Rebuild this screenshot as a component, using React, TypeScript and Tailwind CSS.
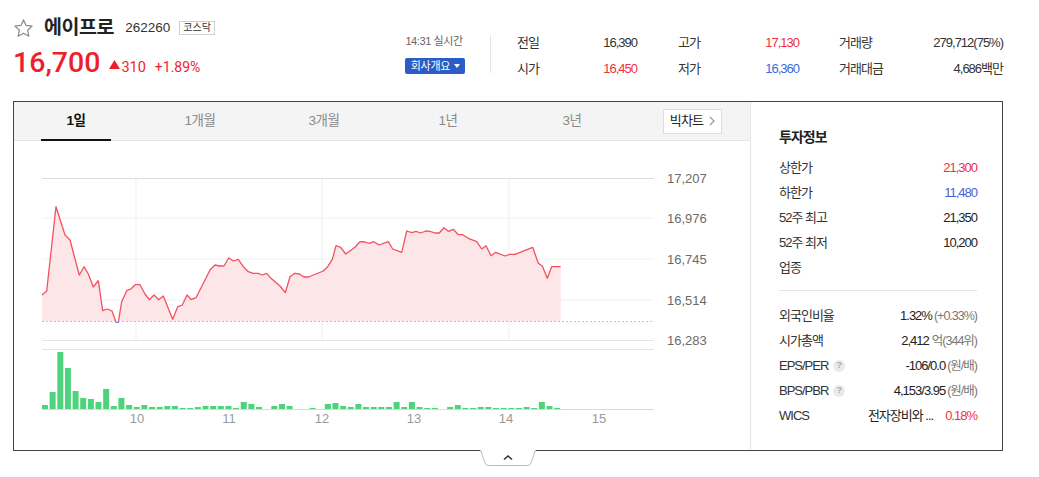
import React from "react";

const PTS: [number, number][] = [
  [42, 295], [46.7, 291], [56, 206.7], [65, 235], [70, 240], [79.3, 275], [84, 266.7], [88.3, 274], [93.3, 287], [98.3, 280.7],
  [102.7, 310.7], [107.3, 309], [112, 311], [116, 322.3], [118.3, 322.3], [121.7, 301.7], [126.7, 290.7], [130.7, 289], [135.3, 284.7],
  [140, 284.7], [145, 294], [149.3, 299.7], [154, 295], [158.7, 299.7], [163.3, 296], [172.7, 319.3], [177.7, 306.7], [182.3, 305],
  [187, 295], [191.3, 299.7], [196, 297.7], [210, 270], [215, 265], [219.3, 266], [224, 266], [228.7, 258], [233.3, 261], [238.3, 259.3],
  [243.3, 266.7], [248.3, 271.7], [253.3, 273.3], [258, 273.3], [262.3, 275], [266.7, 273.3], [271, 278.3], [280, 286], [285.3, 292.7],
  [290, 276.7], [294.7, 273.3], [299.3, 274], [304, 277], [308.7, 277], [313.3, 275], [323.3, 271], [327.7, 266.7], [332.3, 259.3],
  [336, 245.7], [340.7, 247.3], [345.7, 254], [355, 247.3], [360, 241.7], [365, 242], [369.3, 243.3], [374, 241.7], [379, 245],
  [388.3, 241.7], [392.7, 249], [401.7, 252.3], [406.7, 231], [411.7, 232.7], [416, 231.3], [420.7, 233], [425.7, 231], [430, 231.3],
  [435, 233], [439.3, 233], [444, 227.7], [448.3, 231.3], [453.3, 229.3], [458.3, 234.7], [462.7, 234.7], [468.3, 238.3], [476.7, 241.7],
  [481.7, 249], [486, 245.7], [491, 255.7], [495.7, 252.3], [505, 256], [510, 254.3], [515, 254.3], [532.7, 247.3], [538.3, 263.3],
  [542.3, 266], [547.3, 278.3], [551.7, 266.7], [560.7, 266.7],
];

const VOL = [
  4, 17, 57, 41, 18, 11, 10, 7, 20, 3, 11, 4, 2, 4, 2, 2, 3, 3, 1, 1, 2, 3, 3, 3, 3, 1, 7, 5, 2, 0, 3, 5, 3, 0, 0, 1, 0, 5, 6, 3, 2, 5,
  2, 2, 2, 2, 7, 2, 7, 2, 1, 1, 0, 2, 4, 1, 1, 2, 2, 1, 1, 1, 1, 2, 1, 7, 3, 1,
];

const RED = "text-[#f2303c]";
const BLUE = "text-[#3d6be0]";

function Chart() {
  const line = PTS.map((p) => p.join(",")).join(" ");
  const fill = `42,321.5 ${line} 560.7,321.5`;
  const yLabels: [string, number][] = [
    ["17,207", 178],
    ["16,976", 218],
    ["16,745", 259],
    ["16,514", 300],
    ["16,283", 340],
  ];
  const xLabels: [string, number][] = [
    ["10", 137],
    ["11", 229],
    ["12", 322],
    ["13", 414],
    ["14", 506],
    ["15", 599],
  ];
  return (
    <svg width="736" height="308" className="block" style={{ fontFamily: "'Liberation Sans', sans-serif" }}>
      <defs>
        <clipPath id="above">
          <rect x="0" y="0" width="1039" height="321.5" />
        </clipPath>
        <clipPath id="below">
          <rect x="0" y="321.5" width="1039" height="30" />
        </clipPath>
      </defs>
      <g transform="translate(-14 -141)">
        {[218, 259, 300].map((y) => (
          <line key={y} x1="42" x2="654" y1={y} y2={y} stroke="#f0f0f0" />
        ))}
        {[136, 322, 509].map((x) => (
          <line key={x} x1={x} x2={x} y1="178" y2="340" stroke="#efefef" />
        ))}
        <line x1="42" x2="654" y1="178.5" y2="178.5" stroke="#dcdcdc" />
        <line x1="42" x2="654" y1="340.5" y2="340.5" stroke="#e3e3e8" />
        <line x1="42" x2="654" y1="349.5" y2="349.5" stroke="#e3e3e8" />
        <line x1="42" x2="654" y1="409.5" y2="409.5" stroke="#dadada" />
        <polygon points={fill} fill="#fde6e8" clipPath="url(#above)" />
        <line x1="42" x2="654" y1="321.5" y2="321.5" stroke="#c4c4c4" strokeDasharray="2 2" />
        <polyline points={line} fill="none" stroke="#f4505e" strokeWidth="1.3" clipPath="url(#above)" strokeLinejoin="round" />
        <polyline points={line} fill="none" stroke="#5b8ff0" strokeWidth="1.3" clipPath="url(#below)" />
        {VOL.map((h, i) =>
          h > 0 ? (
            <rect key={i} x={42 + i * 7.644} y={409 - h} width="6" height={h} fill="#4fd27c" />
          ) : null
        )}
        {yLabels.map(([t, y]) => (
          <text key={t} x="667" y={y + 5} fontSize="13" fill="#6b6b6b">
            {t}
          </text>
        ))}
        {xLabels.map(([t, x]) => (
          <text key={t} x={x} y="423" fontSize="13" fill="#9a9a9a" textAnchor="middle">
            {t}
          </text>
        ))}
      </g>
    </svg>
  );
}

function Help() {
  return (
    <span className="ml-[5px] inline-flex h-[12px] w-[12px] items-center justify-center rounded-full bg-[#eaeaea] text-[9px] font-bold leading-none tracking-normal text-[#aaa]">
      ?
    </span>
  );
}

function Row({ label, children }: { label: React.ReactNode; children: React.ReactNode }) {
  return (
    <div className="flex h-[25px] items-center justify-between">
      <div className="flex items-center text-[#333]">{label}</div>
      <div className="flex items-baseline text-[#222]">{children}</div>
    </div>
  );
}

function Pair({ label, value, color = "text-[#333]" }: { label: string; value: React.ReactNode; color?: string }) {
  return (
    <div className="flex h-[26px] items-center justify-between">
      <span className="text-[#333]">{label}</span>
      <span className={color}>{value}</span>
    </div>
  );
}

export default function App() {
  return (
    <div className="min-h-[477px] bg-white font-['Liberation_Sans','Noto_Sans_CJK_KR',sans-serif] text-[#222]">
      <div className="ml-[13px] w-[990px]">
        {/* header */}
        <div className="flex h-[101px]">
          <div className="w-[390px] pt-[17px]">
            <div className="flex h-[22px] items-center">
              <svg width="21" height="21" viewBox="0 0 24 24" className="mr-[10px]">
                <path
                  d="M12 2.2l2.95 6.3 6.85.8-5.1 4.7 1.4 6.8L12 17.4l-6.1 3.4 1.4-6.8-5.1-4.7 6.85-.8z"
                  fill="none"
                  stroke="#8a8a8a"
                  strokeWidth="1.4"
                  strokeLinejoin="round"
                />
              </svg>
              <span className="text-[19.5px] font-bold tracking-[-0.4px] text-[#222]">에이프로</span>
              <span className="ml-[11px] text-[13.5px] text-[#333]">262260</span>
              <span className="ml-[9px] flex h-[14px] items-center border border-[#cfcfcf] px-[3px] text-[10px] leading-none text-[#333]">
                코스닥
              </span>
            </div>
            <div className="mt-[10px] flex h-[28px] items-baseline font-['Roboto','Liberation_Sans',sans-serif]">
              <span className="text-[28.5px] font-medium leading-[28px] text-[#f01e2a]">16,700</span>
              <svg width="11" height="9" viewBox="0 0 11 9" className="ml-[9px] mr-[1px] self-center translate-y-[1px]">
                <path d="M5.5 0L11 9H0z" fill="#f01e2a" />
              </svg>
              <span className="text-[14.5px] text-[#f01e2a]">310</span>
              <span className="ml-[9px] text-[14px] text-[#f01e2a]">+1.89%</span>
            </div>
          </div>
          <div className="ml-[13px] w-[87px] pt-[35px]">
            <div className="h-[12px] text-[11px] leading-[12px] tracking-[-0.4px] text-[#666]">14:31 실시간</div>
            <div className="mt-[11px] flex h-[16px] w-[60px] items-center justify-center gap-[4px] rounded-[2px] bg-[#2b5dc7] text-[11px] tracking-[-0.3px] text-white">
              회사개요
              <svg width="6" height="4" viewBox="0 0 6 4">
                <path d="M0 0h6L3 4z" fill="#fff" />
              </svg>
            </div>
          </div>
          <div className="mt-[35px] h-[38px] w-px bg-[#e4e4e4]" />
          <div className="ml-[26px] mt-[30px] flex text-[13px] tracking-[-1px]">
            <div className="w-[120px]">
              <Pair label="전일" value="16,390" />
              <Pair label="시가" value="16,450" color={RED} />
            </div>
            <div className="ml-[41px] w-[121px]">
              <Pair label="고가" value="17,130" color={RED} />
              <Pair label="저가" value="16,360" color={BLUE} />
            </div>
            <div className="ml-[40px] w-[164px]">
              <Pair label="거래량" value="279,712(75%)" />
              <Pair label="거래대금" value="4,686백만" />
            </div>
          </div>
        </div>

        {/* chart box */}
        <div className="flex h-[350px] w-[990px] border border-[#444]">
          <div className="w-[736px]">
            <div className="flex h-[39px] items-center border-b border-[#e4e4e4] bg-[#f4f4f4]">
              {["1일", "1개월", "3개월", "1년", "3년"].map((t, i) => (
                <div key={t} className="relative flex h-full w-[124px] items-center justify-center">
                  <span
                    className={
                      i === 0
                        ? "text-[13.5px] font-bold tracking-[-0.5px] text-[#111]"
                        : "text-[13.5px] tracking-[-0.5px] text-[#8a8a8a]"
                    }
                  >
                    {t}
                  </span>
                  {i === 0 && <div className="absolute bottom-[-1px] left-[27px] h-[2px] w-[70px] bg-[#111]" />}
                </div>
              ))}
              <div className="ml-[29px] flex h-[25px] w-[59px] items-center justify-center gap-[6px] border border-[#dedede] bg-white text-[13px] tracking-[-0.8px] text-[#222]">
                빅차트
                <svg width="6" height="10" viewBox="0 0 6 10">
                  <path d="M1 1l4 4-4 4" fill="none" stroke="#999" strokeWidth="1.2" />
                </svg>
              </div>
            </div>
            <Chart />
          </div>
          <div className="flex-1 border-l border-[#e4e4e4] pl-[28px] pr-[25px] text-[13px] tracking-[-1px]">
            <div className="mt-[25px] h-[20px] text-[14px] font-bold leading-[20px] text-[#222]">투자정보</div>
            <div className="mt-[8px]">
              <Row label="상한가">
                <span className="text-[#f2303c]">21,300</span>
              </Row>
              <Row label="하한가">
                <span className="text-[#4a62d8]">11,480</span>
              </Row>
              <Row label="52주 최고">21,350</Row>
              <Row label="52주 최저">10,200</Row>
              <Row label="업종">{""}</Row>
            </div>
            <div className="mt-[10px] h-px bg-[#e4e4e4]" />
            <div className="mt-[12px]">
              <Row label="외국인비율">
                1.32%<span className="ml-[2px] text-[12.5px] text-[#777]">(+0.33%)</span>
              </Row>
              <Row label="시가총액">
                2,412<span className="ml-[3px] text-[12.5px] text-[#777]">억(344위)</span>
              </Row>
              <Row
                label={
                  <>
                    EPS/PER
                    <Help />
                  </>
                }
              >
                -106/0.0<span className="ml-[2px] text-[12.5px] text-[#777]">(원/배)</span>
              </Row>
              <Row
                label={
                  <>
                    BPS/PBR
                    <Help />
                  </>
                }
              >
                4,153/3.95<span className="ml-[2px] text-[12.5px] text-[#777]">(원/배)</span>
              </Row>
              <Row label="WICS">
                <span className="text-[#222]">전자장비와 ...</span>
                <span className="ml-[12px] text-[#f2303c]">0.18%</span>
              </Row>
            </div>
          </div>
        </div>
        <div className="-mt-px flex w-[990px] justify-center">
          <svg width="56" height="16" viewBox="0 0 56 16">
            <path d="M0.5 0L5 13Q6 15.5 8.5 15.5L47.5 15.5Q50 15.5 51 13L55.5 0" fill="#fff" stroke="#bdbdbd" />
            <path d="M24 9.5l4-3.5 4 3.5" fill="none" stroke="#333" strokeWidth="1.6" />
          </svg>
        </div>
      </div>
    </div>
  );
}
